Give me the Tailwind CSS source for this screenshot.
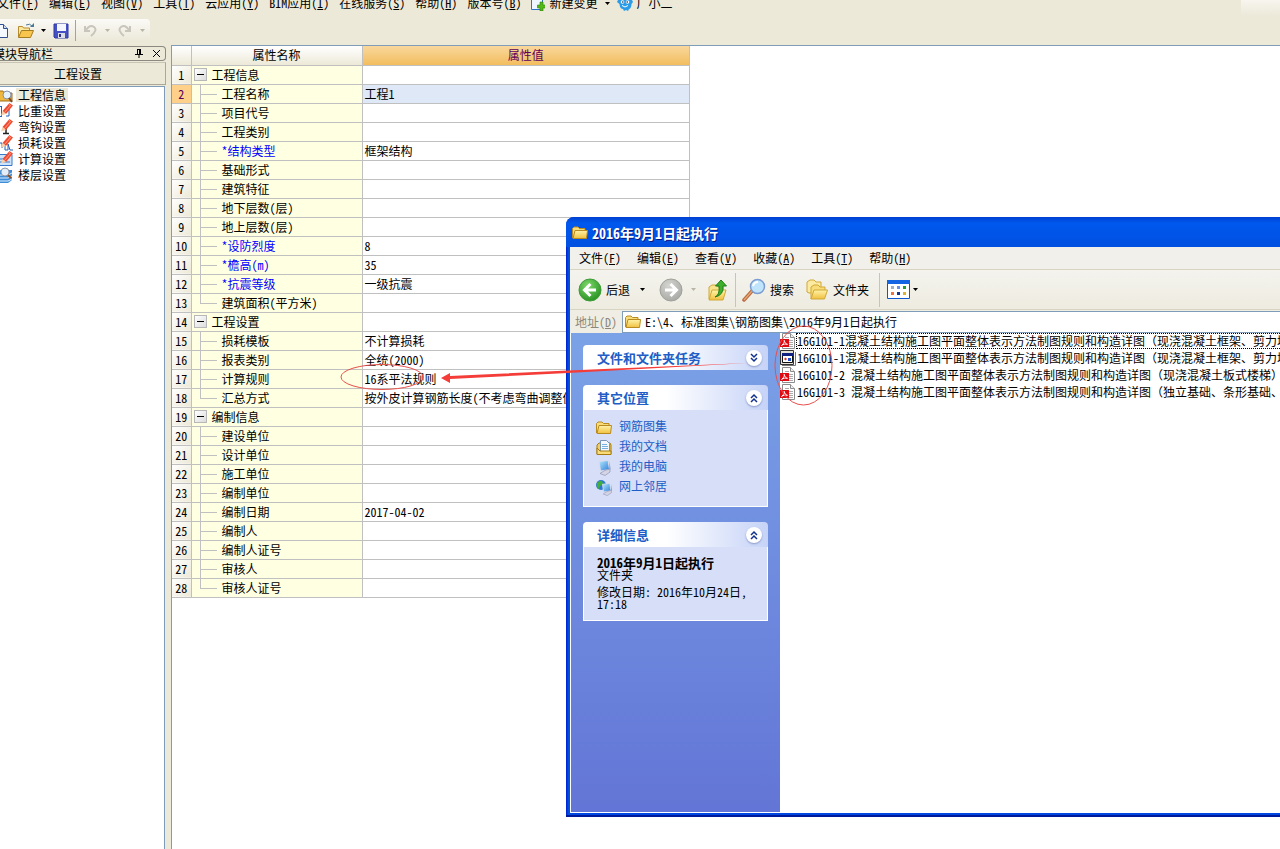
<!DOCTYPE html>
<html lang="zh-CN">
<head>
<meta charset="utf-8">
<title>工程设置</title>
<script src="https://cdn.jsdelivr.net/npm/@tailwindcss/browser@4"></script>
</head>
<body class="relative flex h-screen flex-col overflow-hidden bg-[#ece9d8] text-[12px] leading-[14px] text-black font-['Noto_Sans_Mono_CJK_SC','Noto_Sans_CJK_SC',sans-serif]">

<svg class="absolute h-0 w-0" aria-hidden="true">
  <defs>
    <linearGradient id="gFold" x1="0" y1="0" x2="0" y2="1"><stop offset="0" stop-color="#fff3a8"/><stop offset="1" stop-color="#f0c040"/></linearGradient>
    <linearGradient id="gBlue" x1="0" y1="0" x2="1" y2="1"><stop offset="0" stop-color="#b8e8ff"/><stop offset="1" stop-color="#2a7fd8"/></linearGradient>
    <radialGradient id="gGreen" cx=".4" cy=".3" r=".8"><stop offset="0" stop-color="#7ed86a"/><stop offset="1" stop-color="#1f8a1c"/></radialGradient>
    <radialGradient id="gGray" cx=".4" cy=".3" r=".8"><stop offset="0" stop-color="#d4d4d0"/><stop offset="1" stop-color="#a4a4a0"/></radialGradient>
    <symbol id="folder" viewBox="0 0 16 16"><path d="M.5 13V3.500L2 2h4l1.500 1.500H13V6" fill="#f7dc79" stroke="#b88a20"/><path d="M3 5.500h12.500l-1 8H1z" fill="url(#gFold)" stroke="#b88a20"/></symbol>
    <symbol id="pencil" viewBox="0 0 16 16"><path d="M12.500 0L16 2.500 9 11 5.500 8z" fill="#f04a30"/><path d="M12 1.500l1.500 1-6 7" stroke="#ffa088" fill="none"/><path d="M5.500 8L9 11l-5 1.500z" fill="#f5cfa8"/></symbol>
    <symbol id="pdf" viewBox="0 0 16 16"><path d="M2.500.5h8l4 4v11h-12z" fill="#fff" stroke="#8c8c8c"/><path d="M10.500.5v4h4" fill="#eee" stroke="#8c8c8c"/><path d="M5 4.500h4M9 7.500h4M9 9.500h4M9 11.500h4M5 13.500h8" stroke="#aaa"/><path d="M0 6h9v8H0z" fill="#e00b10"/><path d="M1.500 12.500C4 10.500 4.500 9 4.200 7.300 5 10 5.500 11 7.500 11.300c-2-.5-4-.2-6 1.200" fill="none" stroke="#fff" stroke-width=".9"/></symbol>
    <symbol id="app" viewBox="0 0 16 16"><path d="M2 15.500h13.500V2" fill="none" stroke="#777"/><path d="M.5.500h13v14H.5z" fill="#e4e2d6" stroke="#333"/><path d="M2.500 3.500h10v9h-10z" fill="#fff" stroke="#111"/><path d="M2 3h11v3H2z" fill="#102080"/><path d="M4 9l1.500-1.500L7 9l-1.500 1.500z" fill="#e0302a"/><path d="M8 8h3v3H8z" fill="#2050d0"/></symbol>
    <symbol id="pc" viewBox="0 0 16 16"><path d="M3 1.500l9-1 1.500 9-9 1.500z" fill="url(#gBlue)" stroke="#d8dcec"/><path d="M10 10l4-1v3l-5 3.500-5-2 3-2z" fill="#d4d4e4" stroke="#8888a8" stroke-width=".6"/><path d="M13.500 1l1 8-1 .5z" fill="#7888b8"/></symbol>
    <symbol id="up" viewBox="0 0 10 10"><path d="M2 5l3-3 3 3M2 9l3-3 3 3" fill="none" stroke="#10318c" stroke-width="1.500"/></symbol>
    <symbol id="caret" viewBox="0 0 5 3"><path d="M0 0h5L2.500 3z" fill="currentColor"/></symbol>
  </defs>
</svg>

<!-- main menu, partly scrolled off the top and the left -->
<nav class="flex h-[19px] shrink-0 items-start">
  <div class="-mt-1 -ml-[3px] flex h-[14px] items-center gap-[10px] whitespace-nowrap">
    <button>文件(<u>F</u>)</button><button>编辑(<u>E</u>)</button><button>视图(<u>V</u>)</button><button>工具(<u>T</u>)</button><button>云应用(<u>Y</u>)</button><button>BIM应用(<u>I</u>)</button><button>在线服务(<u>S</u>)</button><button>帮助(<u>H</u>)</button><button>版本号(<u>B</u>)</button>
    <button class="flex items-center gap-1">
      <svg class="h-4 w-[14px]" viewBox="0 0 14 16"><path d="M.5.500h11v14H.5z" fill="#eef6ff" stroke="#2c74c8"/><path d="M9 7h3v3h2.500v3H12v3H9v-3H6.500v-3H9z" fill="#52b818" stroke="#2f7d0c" stroke-width=".6"/></svg>
      新建变更
      <svg class="ml-1 h-[3px] w-[5px]"><use href="#caret"/></svg>
    </button>
    <button class="-ml-[3px] flex items-center gap-[3px]">
      <svg class="h-4 w-4" viewBox="0 0 16 16"><path d="M1 3l3-1h8l3 1v2l1 2-1.500 2c0 3-1.500 5-2.500 5l-1 2-2-1-2 1-1-2c-2 0-3.500-2-3.500-5L0 7l1-2z" fill="#2b9ce8"/><path d="M5 10.500q3 3 6 0" stroke="#fff" fill="none"/><circle cx="5.500" cy="7" r="1.800" fill="#fff"/><circle cx="10.500" cy="7" r="1.800" fill="#fff"/><circle cx="5.800" cy="7" r=".8" fill="#124"/><circle cx="10.200" cy="7" r=".8" fill="#124"/></svg>
      广小二
    </button>
  </div>
  <span class="ml-auto h-[17px] w-[39px] bg-linear-to-b from-[#f7f5ee] to-[#ebe8d8]"></span>
</nav>

<!-- toolbar -->
<div class="flex h-[26px] shrink-0">
  <div class="flex h-[23px] w-[150px] items-center rounded-r-sm bg-linear-to-b from-[#fbfaf6] to-[#ebe8d8]">
    <button aria-label="新建" class="-ml-[6px]"><svg class="h-4 w-[14px]" viewBox="0 0 14 16"><path d="M1.500 1.500h8l4 4v9h-12z" fill="#f4f8ff" stroke="#305090"/><path d="M9.500 1.500v4h4" fill="#cddcf4" stroke="#305090"/></svg></button>
    <button aria-label="打开" class="ml-[9px] flex items-center gap-[6px]"><svg class="h-4 w-[18px]" viewBox="0 0 18 16"><path d="M1.500 14V3.500h4l1 1.500h6v3" fill="#fbe9a0" stroke="#b78a2c"/><path d="M4.500 7.500h12l-3 7H1.500z" fill="#f8c64c" stroke="#a67c20"/><path d="M9 2q4-2 6 1" fill="none" stroke="#4a7898"/><path d="M13 4h4V0z" fill="#4a7898"/></svg><svg class="h-[3px] w-[5px]"><use href="#caret"/></svg></button>
    <button aria-label="保存" class="ml-[7px]"><svg class="h-4 w-4" viewBox="0 0 16 16"><path d="M1 1h14v14H2l-1-1z" fill="#4450c4" stroke="#3038a0"/><path d="M4 1h9v7H4z" fill="#f4f6ff"/><path d="M5 10h7v5H5z" fill="#dcdce4"/><path d="M6 11h2v3H6z" fill="#28308c"/></svg></button>
    <span class="ml-[6px] h-[21px] w-px bg-[#a5a396]"></span>
    <button aria-label="撤销" disabled class="ml-[7px] flex items-center gap-[8px] text-[#b8b5a5]"><svg class="h-4 w-[14px]" viewBox="0 0 14 16"><path d="M2 3v5h5M3 7Q7 1 11 4t-3 9" fill="none" stroke="#c8c6bc" stroke-width="2"/></svg><svg class="h-[3px] w-[5px]"><use href="#caret"/></svg></button>
    <button aria-label="重做" disabled class="ml-[8px] flex items-center gap-[8px] text-[#b8b5a5]"><svg class="h-4 w-[14px]" viewBox="0 0 14 16"><path d="M12 3v5H7M11 7Q7 1 3 4t3 9" fill="none" stroke="#c8c6bc" stroke-width="2"/></svg><svg class="h-[3px] w-[5px]"><use href="#caret"/></svg></button>
  </div>
</div>

<main class="flex min-h-0 flex-1">
  <!-- navigation panel -->
  <aside class="flex w-[166px] shrink-0 flex-col">
    <div class="mt-px flex h-[15px] items-center overflow-hidden rounded-r-sm border border-l-0 border-[#8c8a80] pr-1">
      <span class="-ml-[7px] flex-1 whitespace-nowrap">模块导航栏</span>
      <button aria-label="固定" class="mr-[9px]"><svg class="h-[9px] w-[8px]" viewBox="0 0 8 9"><path d="M2 .500h4M2.500 0v5M5.500 0v5M4.500 0v5M0 5.500h8M4 5v4" stroke="#000" fill="none"/></svg></button>
      <button aria-label="关闭"><svg class="h-[9px] w-[9px]" viewBox="0 0 9 9"><path d="M1 1l7 7M8 1L1 8" stroke="#000"/></svg></button>
    </div>
    <button class="mt-px h-[23px] border border-l-0 border-[#aca899] border-t-[#c8c5b4] pr-[9px]">工程设置</button>
    <ul id="nav" class="mt-px mr-px flex-1 border-t border-r border-[#7f9db9] bg-white"></ul>
  </aside>

  <section class="ml-[5px] min-w-0 flex-1 border-t border-l border-[#7f9db9] bg-white">
    <table class="w-[518px] table-fixed border-collapse border-r border-[#c0c0c0]">
      <thead>
        <tr class="h-[19px]">
          <th class="w-[19px] border-r border-b border-[#c0c0c0] bg-linear-to-b from-white to-[#ece9d8]"></th>
          <th class="w-[171px] border-r border-b border-[#c0c0c0] bg-linear-to-b from-white to-[#ece9d8] p-0 font-normal">属性名称</th>
          <th class="border-b border-[#c0c0c0] bg-linear-to-b from-[#f9d79b] to-[#f2bd5c] p-0 font-normal text-[#5c005c]">属性值</th>
        </tr>
      </thead>
      <tbody id="rows"></tbody>
    </table>
  </section>
</main>

<!-- floating Explorer window -->
<section class="absolute top-[217px] -right-3 left-[566px] flex h-[600px] flex-col rounded-t-lg border-b-2 border-[#001a9c] bg-linear-to-r from-[#0019cf] via-[#0855dd] via-[3px] to-[#0048e0] to-[4px] pb-[2px] pl-[4px]">
  <header class="-ml-[4px] flex h-[30px] shrink-0 items-center gap-1 rounded-tl-lg bg-linear-to-b from-[#0040d0] via-[#0058ee] via-20% to-[#0050e0] pt-[2px] pl-[6px] text-[14px] font-bold text-white [text-shadow:1px_1px_#0a1883]">
    <svg class="h-4 w-4"><use href="#folder"/></svg>
    <h1>2016年9月1日起执行</h1>
  </header>
  <nav class="flex h-[23px] shrink-0 items-center gap-4 border-b border-[#d8d4c2] bg-[#f1f0ea] pl-[9px]">
    <button>文件(<u>F</u>)</button><button>编辑(<u>E</u>)</button><button>查看(<u>V</u>)</button><button>收藏(<u>A</u>)</button><button>工具(<u>T</u>)</button><button>帮助(<u>H</u>)</button>
  </nav>
  <div class="flex h-[40px] shrink-0 items-center border-b border-[#d8d4c2] bg-linear-to-b from-[#f4f3ee] to-[#eeece0] pl-[8px]">
    <button class="flex items-center gap-1"><svg class="h-6 w-6" viewBox="0 0 24 24"><circle cx="12" cy="12" r="11" fill="url(#gGreen)" stroke="#3d9c38"/><path d="M12.500 6L6.500 12l6 6M7 12h11" fill="none" stroke="#fff" stroke-width="3"/></svg>后退<svg class="ml-[6px] h-[3px] w-[5px]"><use href="#caret"/></svg></button>
    <button aria-label="前进" disabled class="ml-[14px] flex items-center gap-[8px] text-[#b8b5a5]"><svg class="h-6 w-6" viewBox="0 0 24 24"><circle cx="12" cy="12" r="11" fill="url(#gGray)" stroke="#a0a09c"/><path d="M11.500 6l6 6-6 6M17 12H6" fill="none" stroke="#fff" stroke-width="3"/></svg><svg class="h-[3px] w-[5px]"><use href="#caret"/></svg></button>
    <button aria-label="向上" class="ml-[11px]"><svg class="h-6 w-[22px]" viewBox="0 0 22 24"><path d="M2 21V9l3-2h4l2 2h5v4" fill="#f8e48c" stroke="#d0a838"/><path d="M5 12h14l-3 10H2z" fill="url(#gFold)" stroke="#d0a838"/><path d="M8 19q5-2 4-11H8.500L14 2l5.500 6H16q1 9-8 11z" fill="#3cb02c" stroke="#1f7d18"/></svg></button>
    <span class="ml-[6px] h-[34px] w-px bg-[#c8c5b2]"></span>
    <button class="ml-[6px] flex items-center gap-1"><svg class="h-6 w-6" viewBox="0 0 24 24"><path d="M10 13l-8 9" stroke="#b86c40" stroke-width="3.500" stroke-linecap="round"/><path d="M10 13l-8 9" stroke="#e8a878" stroke-width="1.200"/><circle cx="15.500" cy="8.500" r="7" fill="#bfe4fb" stroke="#7c9cd0" stroke-width="1.500"/><path d="M11 8q1-4 5-4" stroke="#fff" stroke-width="2" fill="none"/></svg>搜索</button>
    <button class="ml-[12px] flex items-center gap-[5px]"><svg class="h-6 w-[22px]" viewBox="0 0 22 24"><path d="M1 14V4l3-2h4l2 2h5v11H3z" fill="#fbeaa0" stroke="#d0a838"/><path d="M5 21V9l3-2h4l2 2h5v3" fill="#f8dc78" stroke="#d0a838"/><path d="M8 12h13.500l-3 9H5z" fill="url(#gFold)" stroke="#d0a838"/></svg>文件夹</button>
    <span class="ml-[10px] h-[34px] w-px bg-[#c8c5b2]"></span>
    <button aria-label="查看方式" class="ml-[7px] flex items-center gap-[3px]"><svg class="h-[19px] w-[23px]" viewBox="0 0 23 19"><path d="M.5.500h22v18H.5z" fill="#fff" stroke="#0c56d0"/><path d="M0 0h23v4H0z" fill="#1464e4"/><path d="M4 6h3v3H4z" fill="#a0b0c8"/><path d="M10 6h3v3h-3z" fill="#6c90e8"/><path d="M16 6h3v3h-3z" fill="#20a030"/><path d="M4 12h3v3H4z" fill="#f07040"/><path d="M10 12h3v3h-3z" fill="#103890"/><path d="M16 12h3v3h-3z" fill="#e0b030"/></svg><svg class="h-[3px] w-[5px]"><use href="#caret"/></svg></button>
  </div>
  <div class="flex h-[23px] shrink-0 items-center bg-[#f0eee4] pl-[5px]">
    <label for="addr" class="w-[47px] text-[#8a887c]">地址(<u>D</u>)</label>
    <div class="flex h-[22px] flex-1 items-center gap-1 border border-[#7f9db9] bg-white pl-[2px]">
      <svg class="h-4 w-4"><use href="#folder"/></svg>
      <input id="addr" class="min-w-0 flex-1 outline-none" value="E:\4、标准图集\钢筋图集\2016年9月1日起执行">
    </div>
  </div>
  <div class="flex min-h-0 flex-1 border-b border-l border-white bg-white">
    <aside class="flex w-[209px] shrink-0 flex-col gap-[15px] bg-linear-to-b from-[#7ba2e7] to-[#6375d6] px-3 pt-3 text-[#215dc6]">
      <section>
        <h2 class="flex h-[25px] items-center justify-between rounded-t bg-linear-to-r from-white from-45% to-[#c6d3f7] pr-[6px] pl-[14px] text-[13px] font-bold">文件和文件夹任务<button aria-label="展开" class="flex h-4 w-4 items-center justify-center rounded-full bg-white shadow-[0_1px_2px_#8898c8]"><svg class="h-[10px] w-[10px] rotate-180"><use href="#up"/></svg></button></h2>
      </section>
      <section>
        <h2 class="flex h-[25px] items-center justify-between rounded-t bg-linear-to-r from-white from-45% to-[#c6d3f7] pr-[6px] pl-[14px] text-[13px] font-bold">其它位置<button aria-label="收起" class="flex h-4 w-4 items-center justify-center rounded-full bg-white shadow-[0_1px_2px_#8898c8]"><svg class="h-[10px] w-[10px]"><use href="#up"/></svg></button></h2>
        <ul class="border border-t-0 border-white bg-[#d6dff7] pt-[6px] pb-[10px] pl-[12px]">
          <li><a href="#" class="flex h-5 items-center gap-[7px]"><svg class="mt-1 h-4 w-4"><use href="#folder"/></svg>钢筋图集</a></li>
          <li><a href="#" class="flex h-5 items-center gap-[7px]"><svg class="mt-1 h-4 w-4" viewBox="0 0 16 16"><path d="M1 14V5l2-2h11l1 2v9z" fill="#f2cf60" stroke="#a67a10"/><path d="M4.500.500h6l3 3v9h-9z" fill="#f4f9ff" stroke="#7a94b8"/><path d="M6 4.500h5M6 6.500h6M6 8.500h6" stroke="#78b0e0"/><path d="M1 8l3 3h11v3.500H1z" fill="#f7dc79" stroke="#a67a10"/></svg>我的文档</a></li>
          <li><a href="#" class="flex h-5 items-center gap-[7px]"><svg class="mt-1 h-4 w-4"><use href="#pc"/></svg>我的电脑</a></li>
          <li><a href="#" class="flex h-5 items-center gap-[7px]"><svg class="mt-1 h-4 w-4" viewBox="0 0 16 16"><circle cx="5" cy="5" r="5" fill="#2c78d4"/><path d="M1 3q3-3 5-2l1 3-3 2-1 3q-3-2-2-6z" fill="#3fae3a"/><svg x="4" y="3" width="13" height="13"><use href="#pc"/></svg></svg>网上邻居</a></li>
        </ul>
      </section>
      <section>
        <h2 class="flex h-[25px] items-center justify-between rounded-t bg-linear-to-r from-white from-45% to-[#c6d3f7] pr-[6px] pl-[14px] text-[13px] font-bold">详细信息<button aria-label="收起" class="flex h-4 w-4 items-center justify-center rounded-full bg-white shadow-[0_1px_2px_#8898c8]"><svg class="h-[10px] w-[10px]"><use href="#up"/></svg></button></h2>
        <div class="border border-t-0 border-white bg-[#d6dff7] pt-[10px] pb-[10px] pl-[13px] leading-[12px] text-black">
          <p class="text-[13px] leading-[12px] font-bold">2016年9月1日起执行</p>
          <p>文件夹</p>
          <p class="mt-[5px]">修改日期: 2016年10月24日,<br>17:18</p>
        </div>
      </section>
    </aside>
    <ul id="files" class="min-w-0 flex-1 overflow-hidden"></ul>
  </div>
</section>

<!-- hand-drawn marks -->
<svg class="pointer-events-none absolute top-0 left-0 h-[849px] w-[1280px]" viewBox="0 0 1280 849">
  <ellipse cx="382" cy="377" rx="41" ry="12.500" fill="none" stroke="#e8504c"/>
  <ellipse cx="803.500" cy="365.500" rx="28.500" ry="39.500" fill="none" stroke="#e8504c"/>
  <path d="M441 378l9-5v3l118-5.500 180-7.500-180 10-118 6v4z" fill="#f43c38"/>
</svg>

<script>
const nav = [
  ['工程信息', '<path d="M0 4h6l1 2h8v8H0z" fill="#f0b83c" stroke="#a07018"/><circle cx="10" cy="8" r="4" fill="#e4f2fc" stroke="#8890a0"/><path d="M12 11l3 4" stroke="#804820" stroke-width="2"/>'],
  ['比重设置', '<path d="M4.500 3v11M2 3.500h3M2 13.500h3M12 6v7h-3" fill="none" stroke="#2860b8"/><use href="#pencil"/>'],
  ['弯钩设置', '<path d="M7 8l2-1v7M6 14.500h6" fill="none" stroke="#222" stroke-width="1.500"/><use href="#pencil"/>'],
  ['损耗设置', '<path d="M2 8h3v5M8 10v5h3v-6l2 6h3" fill="none" stroke="#2860b8"/><use href="#pencil"/>'],
  ['计算设置', '<path d="M0 3.500h15v11H0z" fill="#cfe4fa" stroke="#3878c8"/><path d="M1 8h6M1 11h12" stroke="#3878c8"/><use href="#pencil"/>'],
  ['楼层设置', '<path d="M0 5l4-2h11v10l-4 3H0z" fill="#3c8cd8"/><path d="M0 8h11l4-2M0 11h11l4-2M0 14h11l4-2" fill="none" stroke="#e0f0ff"/><circle cx="8" cy="5" r="4" fill="#e4eef8" stroke="#9098a8"/><path d="M11 8l3 3" stroke="#905020" stroke-width="2"/>']
];
document.getElementById('nav').innerHTML = nav.map(([t, icon], i) =>
  `<li><button class="flex h-4 items-center gap-[3px]"><svg class="-ml-[3px] h-4 w-4" viewBox="0 0 16 16">${icon}</svg><span class="${i ? 'px-[2px]' : 'bg-[#ece9d8] px-[2px]'}">${t}</span></button></li>`).join('');

const rows = [
  ['+工程信息'], ['工程名称', '工程1'], ['项目代号'], ['工程类别'], ['*结构类型', '框架结构'], ['基础形式'], ['建筑特征'],
  ['地下层数(层)'], ['地上层数(层)'], ['*设防烈度', '8'], ['*檐高(m)', '35'], ['*抗震等级', '一级抗震'], ['建筑面积(平方米)'],
  ['+工程设置'], ['损耗模板', '不计算损耗'], ['报表类别', '全统(2000)'], ['计算规则', '16系平法规则'], ['汇总方式', '按外皮计算钢筋长度(不考虑弯曲调整值)'],
  ['+编制信息'], ['建设单位'], ['设计单位'], ['施工单位'], ['编制单位'], ['编制日期', '2017-04-02'], ['编制人'], ['编制人证号'], ['审核人'], ['审核人证号']
];
document.getElementById('rows').innerHTML = rows.map(([name, value = ''], i) => {
  const group = name[0] === '+', required = name[0] === '*', selected = i === 1;
  const last = !rows[i + 1] || rows[i + 1][0][0] === '+';
  const label = group
    ? `<div class="flex h-[18px] items-center gap-[5px] pl-[2px]"><button aria-label="折叠" class="flex h-[13px] w-[13px] items-center justify-center border border-[#b8b8b8] bg-linear-to-br from-white to-[#dcdcdc]"><span class="h-px w-[7px] bg-black"></span></button>${name.slice(1)}</div>`
    : `<div class="flex h-[18px] items-center gap-[5px] pl-[8px]"><span class="flex w-[17px] flex-col self-stretch"><span class="h-[10px] border-b border-l border-[#c0c0c0]"></span><span class="${last ? 'flex-1' : 'flex-1 border-l border-[#c0c0c0]'}"></span></span><span class="${required ? 'text-[#0000ff]' : ''}">${name}</span></div>`;
  return `<tr class="h-[19px]">
    <td class="${selected ? 'border-r border-b border-[#c0c0c0] bg-[#ffd08a] p-0 text-center text-[#5c005c]' : 'border-r border-b border-[#c0c0c0] bg-linear-to-br from-white to-[#ece9d8] p-0 text-center'}">${i + 1}</td>
    <td class="border-r border-b border-[#c0c0c0] bg-[#ffffe1] p-0">${label}</td>
    <td class="${selected ? 'border-b border-[#c0c0c0] bg-[#dfe8f6] p-0 pl-[2px]' : 'border-b border-[#c0c0c0] p-0 pl-[2px]'}">${value}</td></tr>`;
}).join('');

const files = [
  ['pdf', '16G101-1混凝土结构施工图平面整体表示方法制图规则和构造详图（现浇混凝土框架、剪力墙、梁、板）'],
  ['app', '16G101-1混凝土结构施工图平面整体表示方法制图规则和构造详图（现浇混凝土框架、剪力墙、梁、板）'],
  ['pdf', '16G101-2 混凝土结构施工图平面整体表示方法制图规则和构造详图（现浇混凝土板式楼梯）'],
  ['pdf', '16G101-3 混凝土结构施工图平面整体表示方法制图规则和构造详图（独立基础、条形基础、筏形基础、桩基础）']
];
document.getElementById('files').innerHTML = files.map(([icon, t], i) =>
  `<li class="flex h-[17px] items-start whitespace-nowrap"><svg class="h-4 w-4 shrink-0"><use href="#${icon}"/></svg><span class="${i ? 'border border-transparent' : 'border border-dotted border-black'}">${t}</span></li>`).join('');
</script>
</body>
</html>
